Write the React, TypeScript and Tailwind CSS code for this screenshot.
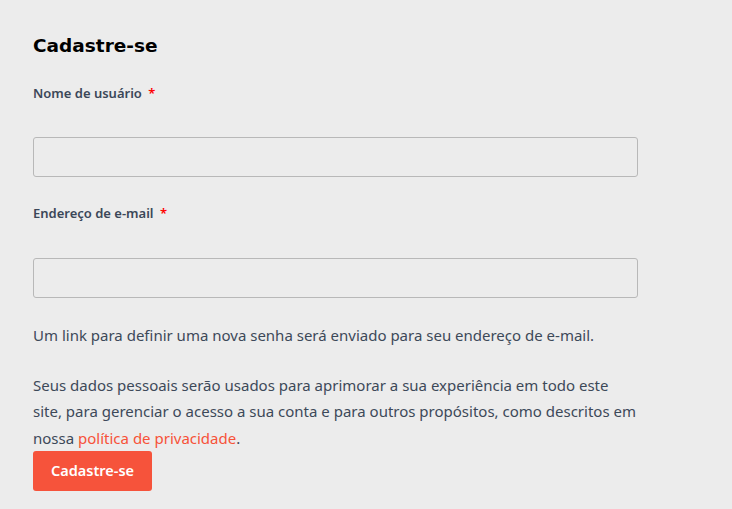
import React from "react";

export default function App() {
  const body = { fontFamily: '"Noto Sans", "Open Sans", sans-serif' };
  return (
    <div className="min-h-[509px] w-full bg-[#ececec] px-[33px] pt-[33px]" style={body}>
      <div className="w-[605px]">
        <h2
          className="text-[18.5px] font-bold leading-[26px] text-black"
          style={{ fontFamily: '"DejaVu Sans", sans-serif' }}
        >
          Cadastre-se
        </h2>
        <div className="mt-[25px] text-[13px] font-semibold leading-[18px] text-[#3b4758]">
          Nome de usuário <span className="ml-[3px] text-[#ff0000]">*</span>
        </div>
        <input className="mt-[35px] block h-[40px] w-full rounded-[3px] border border-[#b8b8b8] bg-[#ececec]" />
        <div className="mt-[27px] text-[13px] font-semibold leading-[18px] text-[#3b4758]">
          Endereço de e-mail <span className="ml-[3px] text-[#ff0000]">*</span>
        </div>
        <input className="mt-[36px] block h-[40px] w-full rounded-[3px] border border-[#b8b8b8] bg-[#ececec]" />
        <p className="mt-[24px] text-[15px] leading-[26.5px] text-[#3d4959]">
          Um link para definir uma nova senha será enviado para seu endereço de e-mail.
        </p>
        <p className="mt-[23px] text-[15px] leading-[26.5px] text-[#3d4959]">
          Seus dados pessoais serão usados para aprimorar a sua experiência em todo este site, para gerenciar o
          acesso a sua conta e para outros propósitos, como descritos em nossa{" "}
          <a className="text-[#f75239]">política de privacidade</a>.
        </p>
        <button className="mt-[0px] flex h-[40px] w-[119px] items-center justify-center rounded-[3px] bg-[#f6533b] text-[14.5px] font-semibold text-white">
          Cadastre-se
        </button>
      </div>
    </div>
  );
}
